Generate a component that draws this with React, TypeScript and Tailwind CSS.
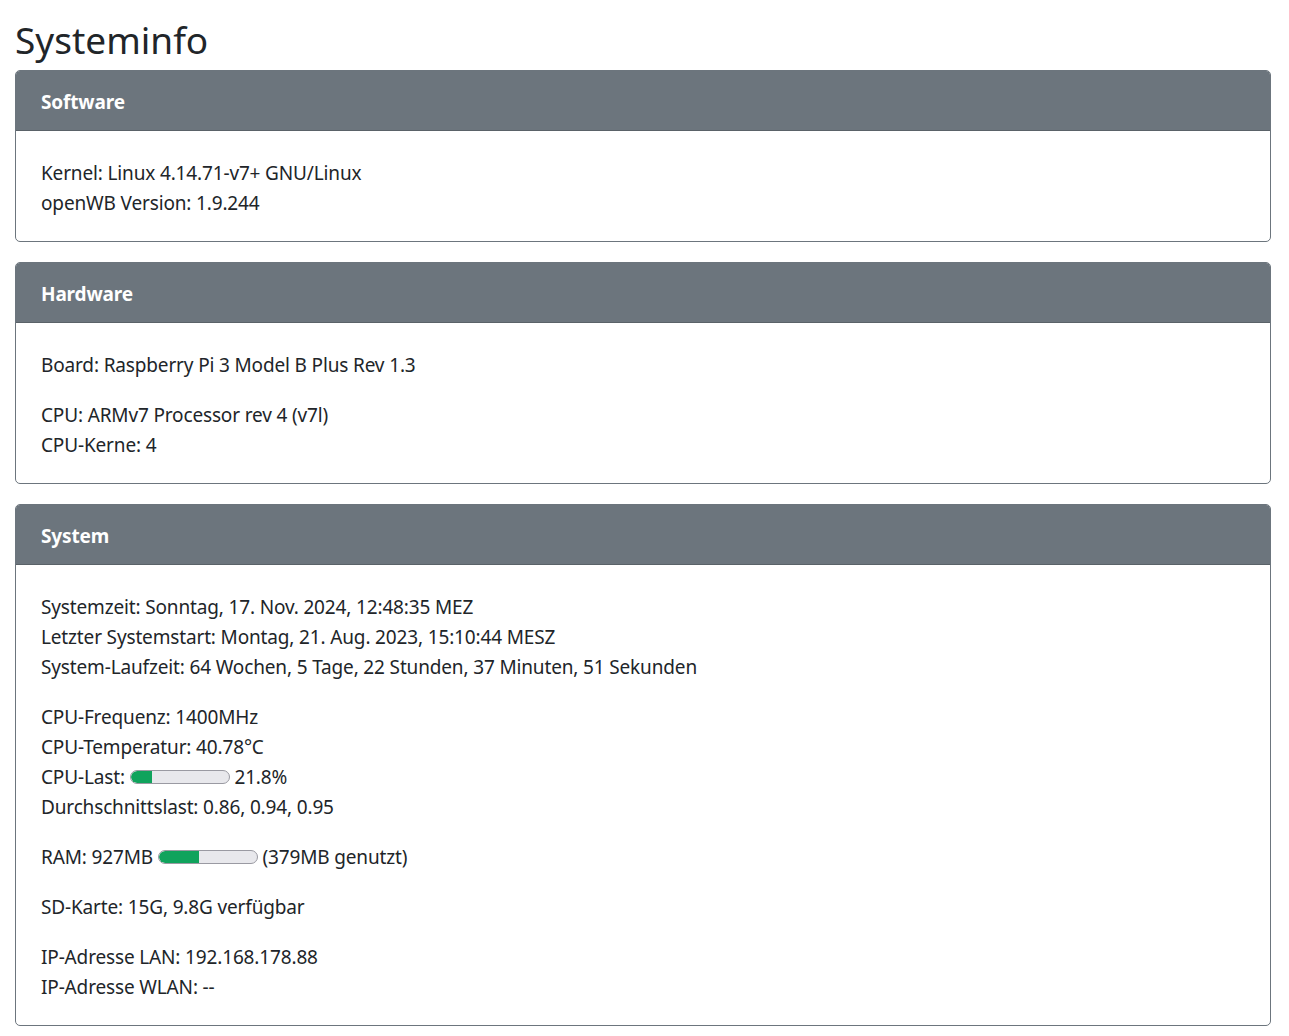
import React from "react";

function Bar({ pct }: { pct: number }) {
  return (
    <span className="inline-flex align-middle h-[14px] w-[100px] rounded-full border border-[#9a9aa2] bg-[#e8e8ec] overflow-hidden relative top-[-2px]">
      <span className="h-full bg-[#10a35c] rounded-l-full" style={{ width: `${pct}%` }} />
    </span>
  );
}

function Card({ title, children }: { title: string; children: React.ReactNode }) {
  return (
    <div className="mb-[20px] rounded-[5px] border border-[#6c757d] overflow-hidden">
      <div className="bg-[#6c757d] px-[25px] pt-[16px] pb-[13px] border-b border-[#5a6268] text-white font-bold leading-[30px]">
        {title}
      </div>
      <div className="px-[25px] pt-[27px] pb-[23px] leading-[30px] flex flex-col gap-[20px]">{children}</div>
    </div>
  );
}

export default function App() {
  return (
    <div
      className="pl-[15px] pr-[18px] bg-white text-[#212529] text-[19px] tracking-[-0.15px] min-h-[1036px]"
      style={{ fontFamily: '"Noto Sans", "Open Sans", sans-serif' }}
    >
      <h1 className="text-[37px] leading-[48px] pt-[16px] pb-[6px] font-normal tracking-normal">Systeminfo</h1>
      <Card title="Software">
        <div>
          <div>Kernel: Linux 4.14.71-v7+ GNU/Linux</div>
          <div>openWB Version: 1.9.244</div>
        </div>
      </Card>
      <Card title="Hardware">
        <div>Board: Raspberry Pi 3 Model B Plus Rev 1.3</div>
        <div>
          <div>CPU: ARMv7 Processor rev 4 (v7l)</div>
          <div>CPU-Kerne: 4</div>
        </div>
      </Card>
      <Card title="System">
        <div>
          <div>Systemzeit: Sonntag, 17. Nov. 2024, 12:48:35 MEZ</div>
          <div>Letzter Systemstart: Montag, 21. Aug. 2023, 15:10:44 MESZ</div>
          <div>System-Laufzeit: 64 Wochen, 5 Tage, 22 Stunden, 37 Minuten, 51 Sekunden</div>
        </div>
        <div>
          <div>CPU-Frequenz: 1400MHz</div>
          <div>CPU-Temperatur: 40.78°C</div>
          <div>
            CPU-Last: <Bar pct={21.8} /> 21.8%
          </div>
          <div>Durchschnittslast: 0.86, 0.94, 0.95</div>
        </div>
        <div>
          RAM: 927MB <Bar pct={40.9} /> (379MB genutzt)
        </div>
        <div>SD-Karte: 15G, 9.8G verfügbar</div>
        <div>
          <div>IP-Adresse LAN: 192.168.178.88</div>
          <div>IP-Adresse WLAN: --</div>
        </div>
      </Card>
    </div>
  );
}
